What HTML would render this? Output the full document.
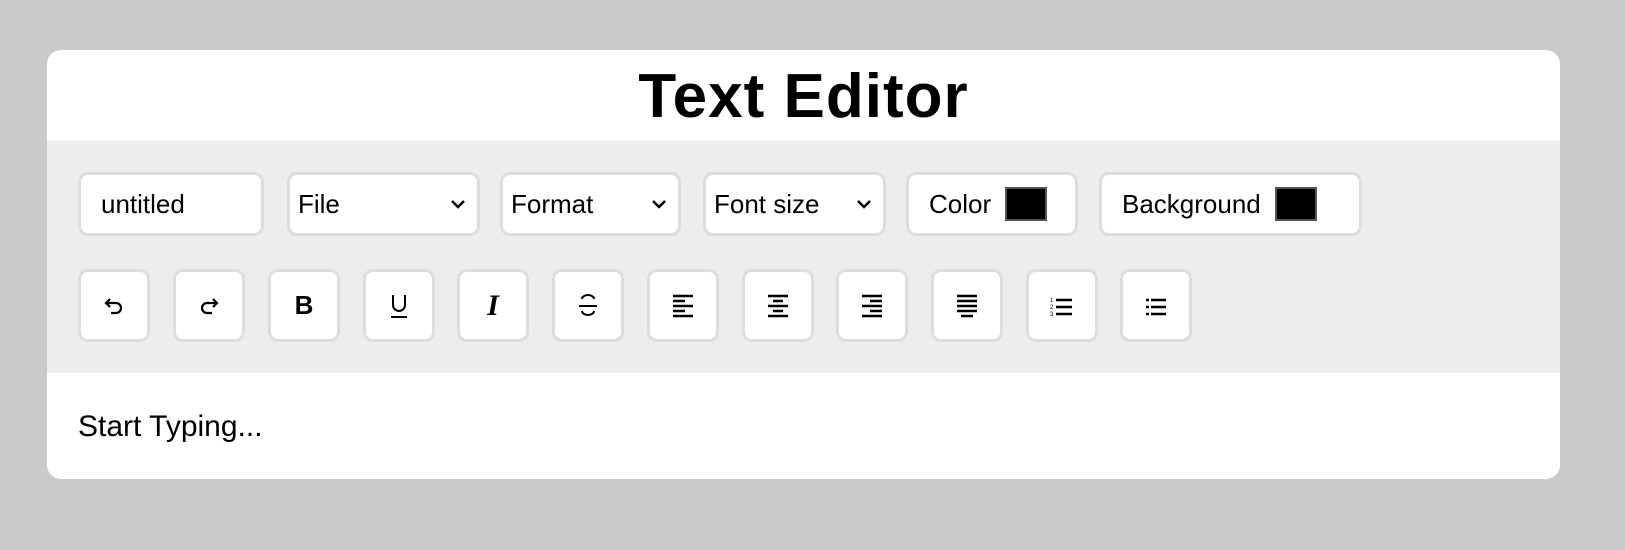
<!DOCTYPE html>
<html><head><style>
*{box-sizing:border-box;margin:0;padding:0}
body{width:1625px;height:550px;background:#cacaca;font-family:"Liberation Sans",sans-serif;position:relative;overflow:hidden}
.card{position:absolute;left:47px;top:50px;width:1513px;height:429px;background:#fff;border-radius:14px;overflow:hidden}
h1{position:absolute;left:0;right:0;top:11px;text-align:center;font-size:62px;font-weight:bold;letter-spacing:1px;color:#000}
.bar{position:absolute;left:0;top:91px;width:1513px;height:232px;background:#ededed}
.chip{position:absolute;top:81px;height:64px;background:#fff;border:3px solid #ddd;border-radius:10px;font-size:26px;color:#000;display:flex;align-items:center}
.chip .arr{position:absolute;right:10px;top:20px}
.sw{display:inline-block;width:42px;height:34px;background:#000;border:2px solid #555;margin-left:14px}
.btn{position:absolute;top:178px;width:72px;height:73px;background:#fff;border:3px solid #ddd;border-radius:10px;display:flex;align-items:center;justify-content:center}
.txt{position:absolute;left:31px;top:360px;font-size:30px;color:#000}
.bar .chip{top:31px}
.bar .btn{top:128px}
</style></head><body>
<div class="card">
<h1>Text Editor</h1>
<div class="bar">
<div class="chip" style="left:31px;width:186px;padding-left:20px">untitled</div>
<div class="chip" style="left:240px;width:193px;padding-left:8px">File<svg class="arr" width="18" height="18" viewBox="0 0 18 18"><path d="M3 6l6 6 6-6" fill="none" stroke="#000" stroke-width="2.5"/></svg></div>
<div class="chip" style="left:453px;width:181px;padding-left:8px">Format<svg class="arr" width="18" height="18" viewBox="0 0 18 18"><path d="M3 6l6 6 6-6" fill="none" stroke="#000" stroke-width="2.5"/></svg></div>
<div class="chip" style="left:656px;width:183px;padding-left:8px">Font size<svg class="arr" width="18" height="18" viewBox="0 0 18 18"><path d="M3 6l6 6 6-6" fill="none" stroke="#000" stroke-width="2.5"/></svg></div>
<div class="chip" style="left:859px;width:172px;padding-left:20px">Color<span class="sw"></span></div>
<div class="chip" style="left:1052px;width:263px;padding-left:20px">Background<span class="sw"></span></div>

<div class="btn" style="left:31px"><svg width="24" height="24" viewBox="0 0 24 24"><path d="M8 5L4 9l4 4M4 9h10a5 5 0 010 10H9" fill="none" stroke="#000" stroke-width="2.2"/></svg></div>
<div class="btn" style="left:126px"><svg width="24" height="24" viewBox="0 0 24 24"><path d="M16 5l4 4-4 4M20 9H10a5 5 0 000 10h5" fill="none" stroke="#000" stroke-width="2.2"/></svg></div>
<div class="btn" style="left:221px;font-weight:bold;font-size:26px">B</div>
<div class="btn" style="left:316px"><svg width="24" height="28" viewBox="0 0 24 28"><path d="M6 3v10a6 6 0 0012 0V3M4 25h16" fill="none" stroke="#000" stroke-width="2"/></svg></div>
<div class="btn" style="left:410px;font-weight:bold;font-style:italic;font-family:'Liberation Serif',serif;font-size:30px">I</div>
<div class="btn" style="left:505px"><svg width="24" height="28" viewBox="0 0 24 28"><path d="M18 7a6 4 0 00-12 0M6 19a6 4 0 0012 0M3 14h18" fill="none" stroke="#000" stroke-width="2"/></svg></div>
<div class="btn" style="left:600px"><svg width="24" height="24" viewBox="0 0 24 24"><path d="M2 2h20M2 7h12M2 12h20M2 17h12M2 22h20" stroke="#000" stroke-width="2.5"/></svg></div>
<div class="btn" style="left:695px"><svg width="24" height="24" viewBox="0 0 24 24"><path d="M2 2h20M7 7h10M2 12h20M7 17h10M2 22h20" stroke="#000" stroke-width="2.5"/></svg></div>
<div class="btn" style="left:789px"><svg width="24" height="24" viewBox="0 0 24 24"><path d="M2 2h20M10 7h12M2 12h20M10 17h12M2 22h20" stroke="#000" stroke-width="2.5"/></svg></div>
<div class="btn" style="left:884px"><svg width="24" height="24" viewBox="0 0 24 24"><path d="M2 2h20M2 7h20M2 12h20M2 17h20M6 22h12" stroke="#000" stroke-width="2.5"/></svg></div>
<div class="btn" style="left:979px"><svg width="24" height="22" viewBox="0 0 24 22"><text x="0" y="7" font-size="6" font-family="Liberation Sans">1</text><text x="0" y="14" font-size="6" font-family="Liberation Sans">2</text><text x="0" y="21" font-size="6" font-family="Liberation Sans">3</text><path d="M6 5h16M6 12h16M6 19h16" stroke="#000" stroke-width="2.5"/></svg></div>
<div class="btn" style="left:1073px"><svg width="24" height="22" viewBox="0 0 24 22"><path d="M2 5h3M2 12h3M2 19h3M7 5h15M7 12h15M7 19h15" stroke="#000" stroke-width="2.5"/></svg></div>
</div>
<div class="txt">Start Typing...</div>
</div>
</body></html>
